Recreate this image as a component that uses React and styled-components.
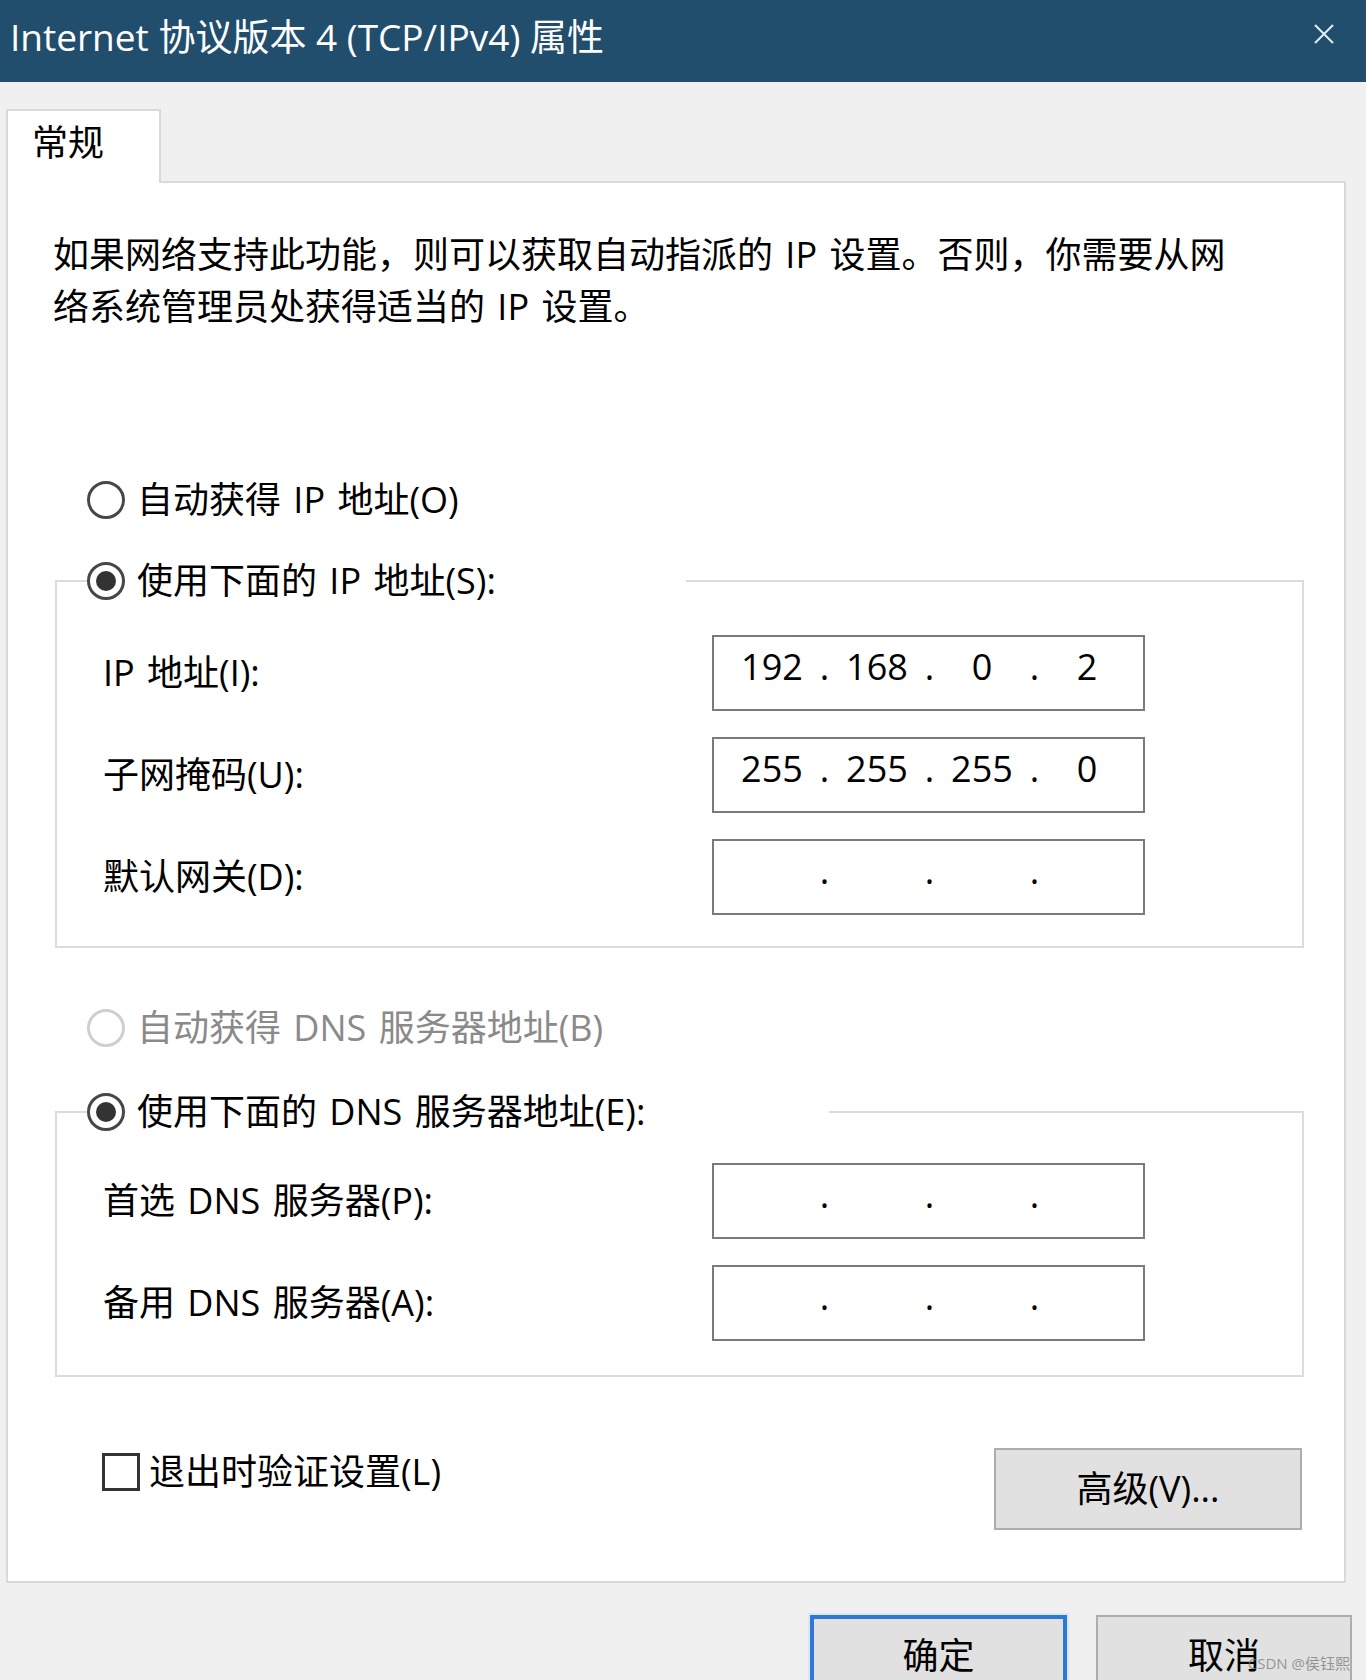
import React from "react";
import styled, { createGlobalStyle } from "styled-components";

const GlobalStyle = createGlobalStyle`
  html, body { margin: 0; padding: 0; }
  body {
    background: #f0f0f0;
    font-family: "Open Sans", "Noto Sans CJK SC", sans-serif;
    overflow: hidden;
  }
  *, *::before, *::after { box-sizing: border-box; }
`;

const Window = styled.div`
  position: relative;
  width: 1366px;
  height: 1680px;
  overflow: hidden;
  background: #f0f0f0;
  display: flex;
  flex-direction: column;
  color: #000;
  font-size: 36px;
  word-spacing: 3px;
`;

const TitleBar = styled.header`
  flex: none;
  height: 82px;
  background: #214e6c;
  color: #fff;
  display: flex;
  align-items: flex-start;
  justify-content: space-between;
  padding: 0 32px 0 10px;
`;

const Title = styled.h1`
  margin: 0;
  font-size: 37px;
  font-weight: 400;
  line-height: 74px;
  word-spacing: 0;
  white-space: nowrap;
`;

const CloseButton = styled.button`
  margin-top: 24px;
  width: 20px;
  height: 20px;
  padding: 0;
  border: 0;
  background: none;
  display: flex;
`;

const Content = styled.main`
  padding: 27px 20px 0 6px;
  display: flex;
  flex-direction: column;
`;

const TabStrip = styled.div`
  display: flex;
`;

const Tab = styled.div`
  width: 155px;
  height: 74px;
  margin-bottom: -2px;
  position: relative;
  z-index: 1;
  background: #fff;
  border: 2px solid #d9d9d9;
  border-bottom: 0;
  padding: 12px 0 0 24px;
  line-height: 40px;
`;

const Panel = styled.section`
  background: #fff;
  border: 2px solid #d9d9d9;
  padding: 46px 0 51px 0;
  display: flex;
  flex-direction: column;
`;

const Description = styled.p`
  margin: 0 0 0 45px;
  line-height: 52px;
  white-space: nowrap;
`;

const OptionRow = styled.label`
  display: flex;
  align-items: center;
  gap: 12px;
  height: 40px;
  margin: ${(p) => p.$mt || 0}px 0 0 ${(p) => p.$ml ?? 79}px;
  line-height: 40px;
  white-space: nowrap;
  color: ${(p) => (p.$disabled ? "#8a8a8a" : "#000")};
`;

const RadioCircle = styled.span`
  flex: none;
  width: 38px;
  height: 38px;
  border-radius: 50%;
  border: 3px solid ${(p) => (p.$disabled ? "#cfcfcf" : "#474747")};
  background: #fff;
  display: flex;
  align-items: center;
  justify-content: center;
  &::after {
    content: "";
    width: 20px;
    height: 20px;
    border-radius: 50%;
    background: #333;
    display: ${(p) => (p.$checked ? "block" : "none")};
  }
`;

const CheckBox = styled.span`
  flex: none;
  width: 38px;
  height: 38px;
  border: 3px solid #333;
  background: #fff;
`;

const GroupBox = styled.fieldset`
  margin: ${(p) => p.$mt}px 40px 0 47px;
  border: 2px solid #dcdcdc;
  padding: 0;
  min-width: 0;
`;

const Legend = styled.legend`
  margin-left: 30px;
  padding: 0;
  width: ${(p) => p.$w}px;
  height: 40px;
`;

const LegendRow = styled(OptionRow)`
  margin: 0;
`;

const FieldGrid = styled.div`
  display: grid;
  grid-template-columns: 609px 433px;
  row-gap: 26px;
  align-items: center;
  padding: ${(p) => p.$pt}px 0 ${(p) => p.$pb}px 46px;
`;

const FieldLabel = styled.span`
  line-height: 48px;
  white-space: nowrap;
`;

const IpBox = styled.div`
  width: 433px;
  height: 76px;
  border: 2px solid #7a7a7a;
  background: #fff;
  display: grid;
  grid-template-columns: 84px 21px 84px 21px 84px 21px 84px;
  align-content: start;
  padding-left: 16px;
  line-height: 60px;
  font-size: 36px;
`;

const Octet = styled.span`
  text-align: center;
`;

const Dot = styled.span`
  text-align: center;
`;

const BottomRow = styled.div`
  display: flex;
  align-items: flex-start;
  margin-top: 71px;
  padding: 0 42px 0 94px;
`;

const CheckRow = styled.label`
  display: flex;
  align-items: center;
  gap: 9px;
  height: 40px;
  margin-top: 4px;
  line-height: 40px;
  white-space: nowrap;
`;

const Button = styled.button`
  flex: none;
  width: ${(p) => p.$w}px;
  height: 82px;
  margin-left: ${(p) => (p.$push ? "auto" : "0")};
  padding: 0;
  font-family: inherit;
  font-size: 36px;
  color: #000;
  background: #e1e1e1;
  border: ${(p) => (p.$primary ? "4px solid #2f78d4" : "2px solid #adadad")};
  box-shadow: ${(p) => (p.$primary ? "0 0 0 2px #d6e8fa" : "none")};
  display: flex;
  align-items: center;
  justify-content: center;
  line-height: 48px;
  white-space: nowrap;
`;

const Footer = styled.footer`
  display: flex;
  justify-content: flex-end;
  gap: 29px;
  padding: 32px 14px 0 0;
`;

const Watermark = styled.div`
  position: absolute;
  right: 16px;
  bottom: 7px;
  font-size: 15px;
  line-height: 20px;
  word-spacing: 0;
  color: rgba(120, 120, 120, 0.75);
  white-space: nowrap;
`;

function CloseIcon() {
  return (
    <svg width="20" height="20" viewBox="0 0 20 20">
      <path d="M1 1 L19 19 M19 1 L1 19" stroke="#e4edf3" strokeWidth="2" fill="none" />
    </svg>
  );
}

function IpField({ value }) {
  const parts = value ? value.split(".") : ["", "", "", ""];
  return (
    <IpBox>
      <Octet>{parts[0]}</Octet>
      <Dot>.</Dot>
      <Octet>{parts[1]}</Octet>
      <Dot>.</Dot>
      <Octet>{parts[2]}</Octet>
      <Dot>.</Dot>
      <Octet>{parts[3]}</Octet>
    </IpBox>
  );
}

function Radio({ checked, disabled, children, ...rest }) {
  return (
    <OptionRow $disabled={disabled} {...rest}>
      <RadioCircle $checked={checked} $disabled={disabled} />
      <span>{children}</span>
    </OptionRow>
  );
}

export default function App() {
  return (
    <>
      <GlobalStyle />
      <Window>
        <TitleBar>
          <Title>Internet 协议版本 4 (TCP/IPv4) 属性</Title>
          <CloseButton aria-label="关闭">
            <CloseIcon />
          </CloseButton>
        </TitleBar>
        <Content>
          <TabStrip>
            <Tab>常规</Tab>
          </TabStrip>
          <Panel>
            <Description>
              如果网络支持此功能，则可以获取自动指派的 IP 设置。否则，你需要从网
              <br />
              络系统管理员处获得适当的 IP 设置。
            </Description>

            <Radio $mt={147}>自动获得 IP 地址(O)</Radio>

            <GroupBox $mt={41}>
              <Legend $w={599}>
                <LegendRow>
                  <RadioCircle $checked />
                  <span>使用下面的 IP 地址(S):</span>
                </LegendRow>
              </Legend>
              <FieldGrid $pt={34} $pb={31}>
                <FieldLabel>IP 地址(I):</FieldLabel>
                <IpField value="192.168.0.2" />
                <FieldLabel>子网掩码(U):</FieldLabel>
                <IpField value="255.255.255.0" />
                <FieldLabel>默认网关(D):</FieldLabel>
                <IpField />
              </FieldGrid>
            </GroupBox>

            <Radio $mt={60} disabled>
              自动获得 DNS 服务器地址(B)
            </Radio>

            <GroupBox $mt={44}>
              <Legend $w={742}>
                <LegendRow>
                  <RadioCircle $checked />
                  <span>使用下面的 DNS 服务器地址(E):</span>
                </LegendRow>
              </Legend>
              <FieldGrid $pt={31} $pb={34}>
                <FieldLabel>首选 DNS 服务器(P):</FieldLabel>
                <IpField />
                <FieldLabel>备用 DNS 服务器(A):</FieldLabel>
                <IpField />
              </FieldGrid>
            </GroupBox>

            <BottomRow>
              <CheckRow>
                <CheckBox />
                <span>退出时验证设置(L)</span>
              </CheckRow>
              <Button $w={308} $push>
                高级(V)...
              </Button>
            </BottomRow>
          </Panel>
        </Content>
        <Footer>
          <Button $w={257} $primary>
            确定
          </Button>
          <Button $w={256}>取消</Button>
        </Footer>
        <Watermark>CSDN @侯钰熙</Watermark>
      </Window>
    </>
  );
}
